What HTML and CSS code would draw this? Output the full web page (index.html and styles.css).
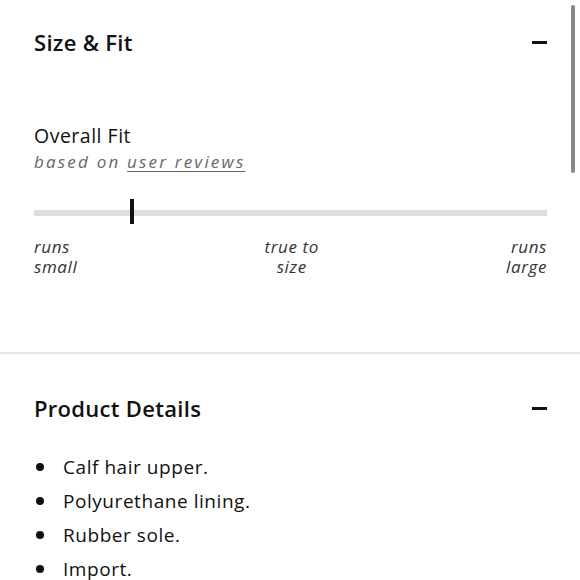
FILE: index.html
```html
<!DOCTYPE html>
<html>
<head>
<meta charset="utf-8">
<link rel="stylesheet" href="styles.css">
</head>
<body>
<div class="page">
  <section class="panel fit">
    <div class="panel-head">
      <h2 class="panel-title">Size &amp; Fit</h2>
      <span class="toggle"></span>
    </div>
    <div class="fit-body">
      <div class="fit-title">Overall Fit</div>
      <div class="fit-sub">based on <span class="link">user reviews</span></div>
      <div class="track"><span class="marker"></span></div>
      <div class="scale">
        <span class="lbl left">runs<br>small</span>
        <span class="lbl mid">true to<br>size</span>
        <span class="lbl right">runs<br>large</span>
      </div>
    </div>
  </section>
  <section class="panel details">
    <div class="panel-head">
      <h2 class="panel-title">Product Details</h2>
      <span class="toggle"></span>
    </div>
    <ul class="bullets">
      <li>Calf hair upper.</li>
      <li>Polyurethane lining.</li>
      <li>Rubber sole.</li>
      <li>Import.</li>
    </ul>
  </section>
  <div class="scrollbar"></div>
</div>
</body>
</html>
```
FILE: styles.css
```css
html, body {
  margin: 0;
  padding: 0;
  background: #fff;
}
body {
  font-family: "Open Sans", "Noto Sans", sans-serif;
  color: #111;
  width: 580px;
  height: 580px;
  overflow: hidden;
}
.page {
  position: relative;
}
.panel {
  padding: 0 33px 0 34px;
}
.fit {
  padding-top: 27px;
  padding-bottom: 75px;
  border-bottom: 2px solid #e6e6e6;
}
.panel-head {
  display: flex;
  align-items: center;
  justify-content: space-between;
  height: 30px;
}
.panel-title {
  margin: 0;
  font-size: 22px;
  font-weight: 600;
  letter-spacing: 0.3px;
  line-height: 30px;
}
.toggle {
  width: 15px;
  height: 3px;
  background: #111;
}
.fit-body {
  padding-top: 65px;
}
.fit-title {
  font-size: 19.5px;
  letter-spacing: 0.5px;
  line-height: 28px;
}
.fit-sub {
  font-size: 17px;
  font-style: italic;
  color: #666;
  letter-spacing: 2.2px;
  line-height: 24px;
}
.link {
  text-decoration: underline;
  text-underline-offset: 3px;
}
.track {
  margin-top: 36px;
  height: 6px;
  background: #dedede;
  position: relative;
}
.marker {
  position: absolute;
  left: 96px;
  top: -11px;
  width: 4px;
  height: 25px;
  background: #111;
}
.scale {
  display: flex;
  justify-content: space-between;
  margin-top: 21px;
  font-size: 17px;
  font-style: italic;
  color: #333;
  letter-spacing: 0.6px;
  line-height: 20px;
}
.lbl.mid { text-align: center; }
.lbl.right { text-align: right; }
.details {
  padding-top: 39px;
}
.bullets {
  list-style: none;
  margin: 27px 0 0 0;
  padding: 0;
  font-size: 19px;
  letter-spacing: 0.55px;
  line-height: 34px;
}
.bullets li {
  display: flex;
  align-items: center;
  gap: 19px;
}
.bullets li::before {
  content: "";
  width: 8px;
  height: 8px;
  margin-left: 2px;
  border-radius: 50%;
  background: #111;
}
.scrollbar {
  position: absolute;
  right: 5px;
  top: 5px;
  width: 4px;
  height: 168px;
  border-radius: 2px;
  background: #888;
}
```
